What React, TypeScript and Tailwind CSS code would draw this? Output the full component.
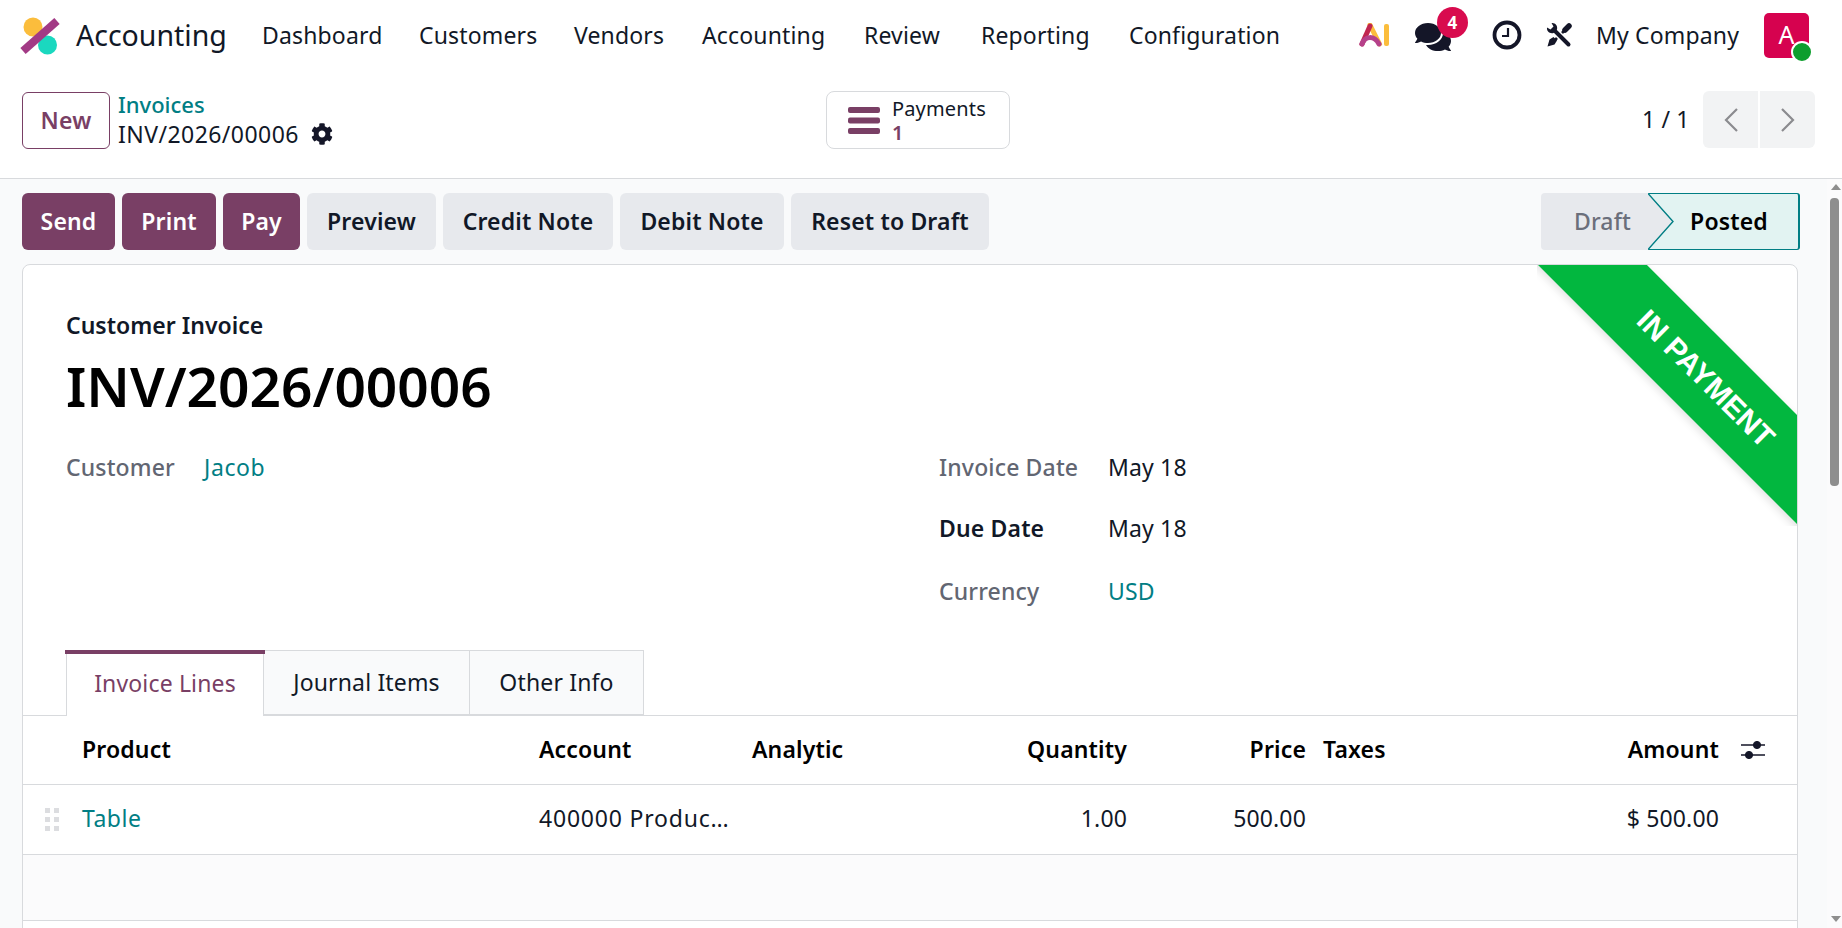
import { FaComments, FaCog } from 'react-icons/fa'

const navItems = [
  { label: 'Dashboard', width: 'w-[157px]' },
  { label: 'Customers', width: 'w-[155px]' },
  { label: 'Vendors', width: 'w-[128px]' },
  { label: 'Accounting', width: 'w-[162px]' },
  { label: 'Review', width: 'w-[117px]' },
  { label: 'Reporting', width: 'w-[148px]' },
  { label: 'Configuration', width: 'w-[170px]' },
]

const primaryActions = [
  { label: 'Send', width: 'w-[93px]' },
  { label: 'Print', width: 'w-[94px]' },
  { label: 'Pay', width: 'w-[77px]' },
]

const secondaryActions = [
  { label: 'Preview', width: 'w-[129px]' },
  { label: 'Credit Note', width: 'w-[170px]' },
  { label: 'Debit Note', width: 'w-[164px]' },
  { label: 'Reset to Draft', width: 'w-[198px]' },
]

function Logo() {
  return (
    <svg width="42" height="42" viewBox="0 0 42 42" className="shrink-0">
      <circle cx="14" cy="13" r="9.5" fill="#fbbd3c" />
      <circle cx="28.5" cy="31" r="9.5" fill="#1ad8bf" />
      <path d="M4 37 L38 7" stroke="#a23a85" strokeWidth="8" />
    </svg>
  )
}

function AiIcon() {
  return (
    <svg width="31" height="24" viewBox="0 0 31 24">
      <path d="M11 2 L20.5 21" stroke="#fbbd3c" strokeWidth="5" strokeLinecap="round" />
      <path d="M11 3 L3 21" stroke="#c0264f" strokeWidth="5" strokeLinecap="round" />
      <path d="M3 21 C6 13 15 12 20 21" stroke="#b5418a" strokeWidth="5" fill="none" strokeLinecap="round" />
      <rect x="25" y="1" width="5" height="22" rx="2" fill="#fbbd3c" />
    </svg>
  )
}

function ClockIcon() {
  return (
    <svg width="30" height="30" viewBox="0 0 30 30" fill="none" stroke="#141628">
      <circle cx="15" cy="15" r="12.5" strokeWidth="3.8" />
      <path d="M16 8 V16 H10" strokeWidth="2.2" />
    </svg>
  )
}

function ToolsIcon() {
  return (
    <svg width="26" height="26" viewBox="0 0 26 26" fill="#141628">
      {/* screwdriver */}
      <path d="M23 4 L19 8" stroke="#141628" strokeWidth="5.5" strokeLinecap="round" />
      <path d="M19 8 L9 18" stroke="#141628" strokeWidth="2.6" />
      <path d="M1.5 24.5 L3.5 17.5 L7.5 15 L11 18.5 L8.5 22.5 Z" />
      {/* wrench */}
      <path d="M8 8 L22.5 22.5" stroke="#ffffff" strokeWidth="7" />
      <path d="M8 8 L22.5 22.5" stroke="#141628" strokeWidth="4" strokeLinecap="round" />
      <path d="M1 5.5 L4.5 7.5 L7.5 4.5 L5.5 1 C9 0.5 12 3.5 11 7.5 L7.5 11 C3.5 12 0.5 9 1 5.5 Z" />
    </svg>
  )
}

function BarsIcon() {
  return (
    <svg width="32" height="27" viewBox="0 0 32 27" fill="#793f65">
      <rect y="0" width="32" height="6" rx="2" />
      <rect y="10.5" width="32" height="6" rx="2" />
      <rect y="21" width="32" height="6" rx="2" />
    </svg>
  )
}

function Chevron({ flip }: { flip?: boolean }) {
  return (
    <svg width="16" height="26" viewBox="0 0 16 26" fill="none" stroke="#8b8b8f" strokeWidth="2.2">
      <path d={flip ? 'M2 2 L13 13 L2 24' : 'M14 2 L3 13 L14 24'} />
    </svg>
  )
}

function SlidersIcon() {
  return (
    <svg width="26" height="22" viewBox="0 0 26 22" fill="#141628" stroke="#141628">
      <path d="M1 6 H25 M1 16 H25" strokeWidth="1.4" />
      <circle cx="17" cy="6" r="3.6" />
      <circle cx="9" cy="16" r="3.6" />
    </svg>
  )
}

function DragHandle() {
  return (
    <svg width="15" height="23" viewBox="0 0 15 23" fill="#dcdde0">
      <rect x="0" y="0" width="5" height="5" />
      <rect x="9" y="0" width="5" height="5" />
      <rect x="0" y="9" width="5" height="5" />
      <rect x="9" y="9" width="5" height="5" />
      <rect x="0" y="18" width="5" height="5" />
      <rect x="9" y="18" width="5" height="5" />
    </svg>
  )
}

function Field({ label, value, link, strong }: { label: string; value: string; link?: boolean; strong?: boolean }) {
  return (
    <div className={strong ? '-mt-px mb-px flex h-[62px] items-center' : 'flex h-[62px] items-center'}>
      <div className={strong ? 'w-[169px] font-semibold text-[#111827]' : 'w-[169px] font-medium text-[#626672]'}>{label}</div>
      <div className={link ? 'text-[#017e84]' : 'text-[#111827]'}>{value}</div>
    </div>
  )
}

export default function App() {
  return (
    <div className="flex h-[928px] w-[1842px] flex-col overflow-hidden bg-white font-['Noto_Sans','Liberation_Sans',sans-serif] text-[23px] tracking-[0.15px] text-[#111827]">
      {/* Navbar */}
      <div className="flex h-[70px] shrink-0 items-center pl-[19px]">
        <Logo />
        <div className="ml-[15px] mt-[1px] w-[186px] text-[28.5px] tracking-normal">Accounting</div>
        <div className="mt-[1px] flex">
          {navItems.map((item) => (
            <div key={item.label} className={item.width}>{item.label}</div>
          ))}
        </div>
        <div className="ml-[60px]">
          <AiIcon />
        </div>
        <div className="relative ml-[25px] h-[28px] w-[32px] text-[#141628]">
          <FaComments className="h-[32px] w-[36px]" />
          <div className="absolute left-[22px] top-[-14px] flex h-[31px] w-[31px] items-center justify-center rounded-full bg-[#d80b4e] text-[17px] font-bold text-white">4</div>
        </div>
        <div className="ml-[45px]">
          <ClockIcon />
        </div>
        <div className="ml-[24px]">
          <ToolsIcon />
        </div>
        <div className="ml-[24px] mt-[1px] w-[168px]">My Company</div>
        <div className="relative flex h-[45px] w-[45px] items-center justify-center rounded-[5px] bg-[#d6024f] text-[25px] text-white">
          A
          <div className="absolute bottom-[-5px] right-[-4px] h-[22px] w-[22px] rounded-full border-2 border-white bg-[#0d9e2d]" />
        </div>
      </div>

      {/* Control panel */}
      <div className="flex h-[109px] shrink-0 items-start border-b border-[#d8dadd] pt-[21px]">
        <div className="ml-[22px] mt-[1px] flex h-[57px] w-[88px] items-center justify-center rounded-[6px] border border-[#793f65] font-semibold text-[#793f65]">New</div>
        <div className="ml-[8px] mt-[-2px] w-[708px]">
          <div className="h-[30px] text-[22px] font-medium leading-[30px] tracking-normal text-[#017e84]">Invoices</div>
          <div className="flex h-[30px] items-center leading-[30px] tracking-[0.45px]">
            INV/2026/00006
            <FaCog className="ml-[12px] text-[22px] text-[#141628]" />
          </div>
        </div>
        <div className="flex h-[58px] w-[184px] items-center rounded-[8px] border border-[#d8dadd] pl-[21px]">
          <BarsIcon />
          <div className="ml-[12px] mt-[2px] text-[20px] leading-[24px]">
            <div>Payments</div>
            <div className="font-semibold text-[#793f65]">1</div>
          </div>
        </div>
        <div className="ml-[632px] mt-[-1px] flex h-[58px] w-[61px] items-center">1 / 1</div>
        <div className="flex h-[57px] gap-[2px]">
          <div className="flex w-[55px] items-center justify-center rounded-l-[6px] bg-[#f2f3f4]"><Chevron /></div>
          <div className="flex w-[55px] items-center justify-center rounded-r-[6px] bg-[#f2f3f4]"><Chevron flip /></div>
        </div>
      </div>

      {/* Scrolling content */}
      <div className="flex min-h-0 flex-1 bg-[#f9fafb]">
        <div className="w-[1827px] pl-[22px] pr-[29px] pt-[14px]">
          <div className="flex h-[57px] items-stretch">
            <div className="flex gap-[7px]">
              {primaryActions.map((a) => (
                <div key={a.label} className={`${a.width} flex items-center justify-center rounded-[6px] bg-[#793f65] font-semibold text-white`}>{a.label}</div>
              ))}
              {secondaryActions.map((a) => (
                <div key={a.label} className={`${a.width} flex items-center justify-center rounded-[6px] bg-[#e7e9ed] font-semibold`}>{a.label}</div>
              ))}
            </div>
            <div className="ml-auto mr-[-2px] flex w-[259px]">
              <div className="flex w-[107px] items-center justify-center rounded-l-[4px] bg-[#e7e9ed] pl-[16px] font-medium text-[#6b6f7b]">Draft</div>
              <div className="relative flex flex-1 items-center justify-center rounded-r-[3px] border-y border-r-2 border-[#017e84] bg-[#e2f3f2] pl-[12px] font-semibold text-black">
                <svg width="26" height="57" viewBox="0 0 26 57" className="absolute left-0 top-[-1px]">
                  <path d="M0 0 L25 28.5 L0 57 Z" fill="#e7e9ed" />
                  <path d="M0 0.5 L25 28.5 L0 56.5" fill="none" stroke="#017e84" strokeWidth="1.4" />
                </svg>
                Posted
              </div>
            </div>
          </div>

          {/* Sheet */}
          <div className="relative mt-[14px] h-[700px] rounded-t-[8px] border border-[#d8dadd] bg-white">
            <div className="absolute right-0 top-0 h-[261px] w-[260px] overflow-hidden">
              <div className="absolute left-[-41px] top-[75px] flex h-[77px] w-[420px] rotate-45 items-center justify-center bg-[#02b73f] font-['Liberation_Sans',sans-serif] text-[30px] font-bold tracking-normal text-white shadow-[0_3px_8px_rgba(0,0,0,0.12)]">
                IN PAYMENT
              </div>
            </div>

            <div className="pl-[43px] pt-[45px]">
              <div className="h-[30px] font-semibold leading-[30px] tracking-normal">Customer Invoice</div>
              <div className="mt-[11px] h-[70px] text-[55px] font-semibold leading-[70px] tracking-normal text-black">INV/2026/00006</div>
              <div className="mt-[15px] flex h-[186px]">
                <div className="flex h-[62px] w-[873px] items-center">
                  <div className="w-[138px] font-medium text-[#626672]">Customer</div>
                  <div className="tracking-[0.6px] text-[#017e84]">Jacob</div>
                </div>
                <div>
                  <Field label="Invoice Date" value="May 18" />
                  <Field label="Due Date" value="May 18" strong />
                  <Field label="Currency" value="USD" link />
                </div>
              </div>
            </div>

            {/* Tabs */}
            <div className="mt-[28px] flex h-[66px] border-b border-[#d8dadd] pl-[43px]">
              <div className="relative -mb-px flex w-[198px] items-center justify-center border-x border-[#d8dadd] bg-white text-[#793f65]">
                <div className="absolute left-[-2px] right-[-2px] top-0 h-[4px] bg-[#793f65]" />
                Invoice Lines
              </div>
              <div className="flex w-[206px] items-center justify-center border-y border-r border-[#d8dadd] bg-[#f9fafb]">Journal Items</div>
              <div className="flex w-[174px] items-center justify-center border-y border-r border-[#d8dadd] bg-[#f9fafb]">Other Info</div>
            </div>

            {/* Lines table */}
            <div className="grid h-[69px] grid-cols-[59px_457px_213px_198px_177px_179px_254px_159px_1fr] items-center border-b border-[#d8dadd] pb-[1px] font-semibold text-black">
              <div />
              <div>Product</div>
              <div>Account</div>
              <div>Analytic</div>
              <div className="text-right">Quantity</div>
              <div className="text-right">Price</div>
              <div className="pl-[17px]">Taxes</div>
              <div className="text-right">Amount</div>
              <div className="pl-[21px]"><SlidersIcon /></div>
            </div>
            <div className="grid h-[70px] grid-cols-[59px_457px_213px_198px_177px_179px_254px_159px_1fr] items-center border-b border-[#d8dadd] pb-[3px]">
              <div className="pl-[22px] pt-[3px]"><DragHandle /></div>
              <div className="tracking-[0.5px] text-[#017e84]">Table</div>
              <div className="whitespace-nowrap tracking-[0.8px]">400000 Produc…</div>
              <div />
              <div className="text-right">1.00</div>
              <div className="text-right">500.00</div>
              <div />
              <div className="text-right">$ 500.00</div>
              <div />
            </div>
            <div className="h-[66px] border-b border-[#d8dadd] bg-[#fbfbfc]" />
          </div>
        </div>

        {/* Scrollbar */}
        <div className="flex w-[15px] flex-col items-start bg-[#fbfbfc] pl-[3px] pt-[5px]">
          <div className="ml-[1px] h-0 w-0 border-x-[5px] border-b-[6px] border-x-transparent border-b-[#8e8e8e]" />
          <div className="mt-[8px] h-[288px] w-[9px] rounded-[4px] bg-[#8e8e8e]" />
          <div className="ml-[1px] mt-[430px] h-0 w-0 border-x-[5px] border-t-[6px] border-x-transparent border-t-[#8e8e8e]" />
        </div>
      </div>
    </div>
  )
}
